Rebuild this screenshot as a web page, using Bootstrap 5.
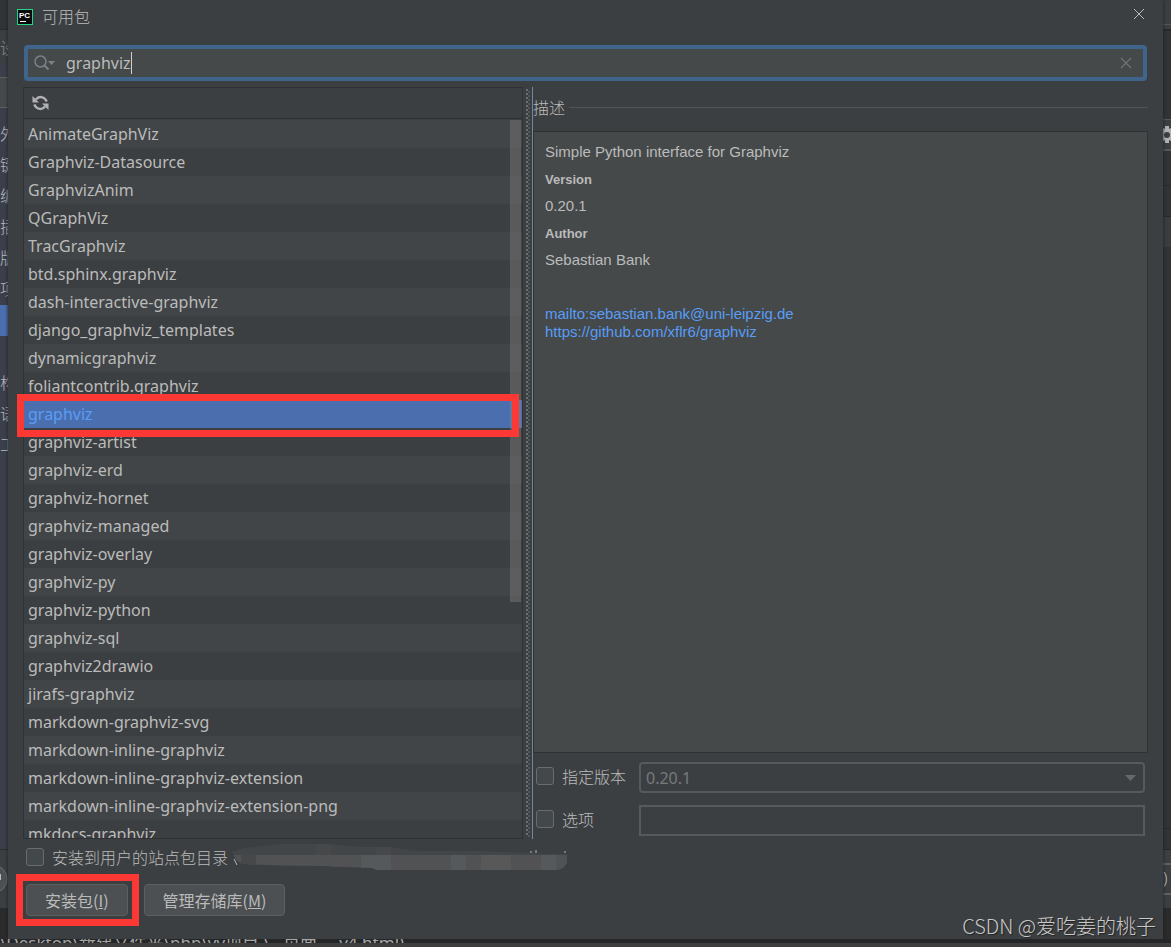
<!DOCTYPE html>
<html lang="zh-CN">
<head>
<meta charset="utf-8">
<meta name="viewport" content="width=device-width, initial-scale=1">
<title>可用包</title>
<link href="https://cdn.jsdelivr.net/npm/bootstrap@5.3.0/dist/css/bootstrap.min.css" rel="stylesheet">
<script src="https://cdn.jsdelivr.net/npm/bootstrap@5.3.0/dist/js/bootstrap.bundle.min.js" defer></script>
<style>
  :root { --panel:#3c3f41; --field:#45494a; --line:#2f3132; --ink:#bbbbbb; --dim:#777a7c; --link:#589df6; }
  body { background:#2b2b2b; color:var(--ink); font:16px/28px "Noto Sans","Noto Sans CJK SC",sans-serif; height:100vh; overflow:hidden; }
  .cjk { font-family:"Noto Sans CJK SC",sans-serif; font-weight:300; }
  .edge { width:8px; overflow:hidden; white-space:nowrap; flex:none; font-weight:300; }
  .edge-left { background:linear-gradient(#313335 29px,#2b2b2b 29px 30px,#3c3f41 30px 65px,#3b3f4b 65px 77px,#5e6060 77px 78px,#45494a 78px 107px,#5e6060 107px 108px,#3b3f4b 108px 849px,#2b2d2e 849px 850px,#3c3f41 850px 908px,#2b2b2b 908px); }
  .edge-right { background:linear-gradient(#3c3f41 24px,#555759 24px 25px,#3c3f41 25px 29px,#28292a 29px 31px,#313335 31px 119px,#555759 119px 120px,#3c3f41 120px 149px,#555759 149px 151px,#313335 151px 185px,#28292a 185px 186px,#313335 186px 216px,#28292a 216px 217px,#3a3c3e 217px 247px,#313335 247px 828px,#28292a 828px 829px,#313335 829px 849px,#28292a 849px 850px,#3c3f41 850px 863px,#5e6060 863px 865px,#3c3f41 865px 893px,#5e6060 893px 895px,#3c3f41 895px 908px,#2b2b2b 908px); }
  .edge li { height:31px; line-height:31px; }
  .edge-top { height:118px; padding-top:32px; line-height:31px; color:#8a8c8d; }
  .edge .current { background:#4b6eaf; margin-top:1px; height:31px; }
  .dialog { background:var(--panel); box-shadow:0 0 3px #1c1d1e; z-index:1; min-width:0; }
  .title-row { height:45px; flex:none; padding:0 16px 0 9px; }
  .title-row .logo { margin-top:9px; }
  .title-row .caption { margin:2px 0 0 9px; }
  .title-row .close-btn { margin:8px 2px 0; }
  .icon-btn { background:none; border:0; padding:0; line-height:0; }
  .search { height:36px; flex:none; border:4px solid #40658d; border-radius:4px; background:var(--field); margin:0 16px; padding:0 11px 0 6px; }
  .search input { background:none; border:0; outline:0; color:var(--ink); font-size:16px; padding:0; margin-left:10px; field-sizing:content; }
  .caret { width:1px; height:22px; background:#d0d0d0; }
  .panes { display:grid; flex:1 1 0; grid-template:minmax(0,1fr) / minmax(0,500fr) 9px minmax(0,616fr); margin:6px 15px 0; min-height:0; }
  .left-pane { border:1px solid var(--line); min-height:0; }
  .tool-row { height:31px; padding-left:8px; border-bottom:1px solid var(--line); }
  .packages { overflow-x:visible; overflow-y:clip; min-height:0; position:relative; padding-top:1px; }
  .packages li { height:28px; padding-left:4px; white-space:nowrap; }
  .packages li:nth-child(odd) { background:#414547; }
  .packages li.chosen { background:#4b6eaf; color:var(--link); position:relative; }
  .thumb { position:absolute; top:1px; right:1px; width:11px; height:67%; background:rgba(140,135,135,.38); }
  .marker { position:absolute; border:7px solid #fc3835; z-index:2; pointer-events:none; }
  .marker-row { inset:-6px 3px -9px -7px; }
  .marker-btn { inset:-11px -12px -11px -11px; }
  .splitter { margin:2px 2px 2px 3px; width:4px;
    background:radial-gradient(circle at 1px 1px,#6c6f71 0 1px,transparent 1px) 0 0/4px 4px, radial-gradient(circle at 3px 3px,#55585a 0 1px,transparent 1px) 0 0/4px 4px; }
  .right-pane { border-left:1px solid #74889d; min-height:0; }
  .desc-head { height:40px; margin-bottom:4px; }
  .desc-head .rule { height:1px; background:#515557; }
  .desc { background:var(--field); border:1px solid var(--line); font:15px/18px "Liberation Sans",sans-serif; padding:11px; min-height:0; overflow:hidden; }
  .desc p { margin:0 0 9px; }
  .desc h2 { font-size:13px; line-height:19px; font-weight:700; margin:0 0 8px; }
  .desc .links { margin-top:36px; }
  .desc a, .desc a:hover { color:var(--link); text-decoration:none; }
  .options { display:grid; grid-template-columns:103px minmax(0,1fr); row-gap:12px; padding:9px 3px 3px; }
  .options label { line-height:26px; padding-bottom:4px; }
  .tick { appearance:none; width:18px; height:18px; margin:0; flex:none; border:1px solid #6b6b6b; border-radius:3px; background:#43494a; }
  .field { height:31px; border:2px solid #57595a; background:var(--panel); color:var(--dim); border-radius:0; padding:0 5px; width:100%; font-size:16px; line-height:24px; }
  select.field { border-radius:4px; appearance:none; opacity:1; }
  .arrow { position:absolute; right:9px; top:13px; }
  .site-row { height:36px; flex:none; padding-left:18px; }
  .buttons { flex:none; padding:9px 18px 23px; gap:16px; }
  .push { height:32px; background:#4c5052; border:1px solid #5e6060; border-radius:4px; color:var(--ink); line-height:28px; padding:0 18px; position:relative; }
  .behind { height:8px; flex:none; overflow:hidden; border-bottom:4px solid #3c3e40; background:#252627; white-space:nowrap; line-height:8px; font-size:17px; color:#a5a5a5; }
  .credit { position:absolute; right:15px; bottom:7px; z-index:3; font-size:20px; line-height:28px; color:#c9c9c9; text-shadow:1px 1px 1px #222; }
</style>
</head>
<body class="d-flex flex-column">
<div class="d-flex flex-grow-1 overflow-hidden">
  <aside class="edge edge-left cjk">
    <div class="edge-top">设</div>
    <ul class="list-unstyled m-0">
      <li>外</li><li>键</li><li>编</li><li>插</li><li>版</li><li>项</li><li class="current"></li><li></li><li>构</li><li>语</li><li>工</li>
    </ul>
    <svg width="8" height="30" style="margin-top:404px"><circle cx="-7" cy="15" r="14" fill="#4c5052" stroke="#6a6d6f"/><path d="M0 10v6" stroke="#bbb" stroke-width="2"/></svg>
  </aside>
  <main class="dialog d-flex flex-column flex-grow-1">
    <header class="title-row d-flex cjk">
      <svg class="logo flex-shrink-0" width="16" height="16" viewBox="0 0 16 16">
        <rect x=".5" y=".5" width="15" height="15" fill="#0a0a0a" stroke="#21d789"/>
        <text x="2" y="9" font-family="Liberation Sans" font-size="8" font-weight="700" fill="#fff">PC</text>
        <path d="M3 12.5h6" stroke="#fff"/>
      </svg>
      <span class="caption">可用包</span>
      <button class="icon-btn close-btn ms-auto align-self-start" aria-label="关闭"><svg width="12" height="12"><path d="M1 1l10 10M11 1L1 11" stroke="#b9bbbc"/></svg></button>
    </header>
    <div class="search d-flex align-items-center">
      <svg width="22" height="18" fill="none" stroke="#7a8288"><circle cx="6.500" cy="7.500" r="5.500" stroke-width="1.500"/><path d="M10.500 11.500l4 4" stroke-width="2"/><path d="M14 7h7l-3.500 4z" fill="#7a8288" stroke="none"/></svg>
      <input id="q" value="graphviz" aria-label="搜索"><span class="caret"></span>
      <button class="icon-btn ms-auto" aria-label="清除"><svg width="12" height="12"><path d="M1 1l10 10M11 1L1 11" stroke="#6c7478" stroke-width="1.300"/></svg></button>
    </div>
    <div class="panes">
      <section class="left-pane d-flex flex-column">
        <div class="tool-row d-flex align-items-center flex-shrink-0">
          <button class="icon-btn" aria-label="刷新"><svg width="17" height="16" viewBox="0 0 17 16" fill="none" stroke="#afb1b3" stroke-width="2.400"><path d="M4 4.500C6.500 1 12 1 14.800 6.500M13 11.500C10.500 15 5 15 2.200 9.500"/><path d="M.5 1v6.500H7zM16.500 15V8.500H10z" fill="#afb1b3" stroke="none"/></svg></button>
        </div>
        <div class="packages flex-grow-1">
          <ul class="list-unstyled m-0">
            <li>AnimateGraphViz</li><li>Graphviz-Datasource</li><li>GraphvizAnim</li><li>QGraphViz</li><li>TracGraphviz</li><li>btd.sphinx.graphviz</li><li>dash-interactive-graphviz</li><li>django_graphviz_templates</li><li>dynamicgraphviz</li><li>foliantcontrib.graphviz</li>
            <li class="chosen">graphviz<span class="marker marker-row"></span></li>
            <li>graphviz-artist</li><li>graphviz-erd</li><li>graphviz-hornet</li><li>graphviz-managed</li><li>graphviz-overlay</li><li>graphviz-py</li><li>graphviz-python</li><li>graphviz-sql</li><li>graphviz2drawio</li><li>jirafs-graphviz</li><li>markdown-graphviz-svg</li><li>markdown-inline-graphviz</li><li>markdown-inline-graphviz-extension</li><li>markdown-inline-graphviz-extension-png</li><li>mkdocs-graphviz</li>
          </ul>
          <div class="thumb"></div>
        </div>
      </section>
      <div class="splitter"></div>
      <section class="right-pane d-flex flex-column">
        <div class="desc-head d-flex align-items-center flex-shrink-0 cjk"><span>描述</span><span class="rule flex-grow-1 ms-1"></span></div>
        <article class="desc flex-grow-1">
          <p>Simple Python interface for Graphviz</p>
          <h2>Version</h2><p>0.20.1</p>
          <h2>Author</h2><p>Sebastian Bank</p>
          <div class="links"><a href="mailto:sebastian.bank@uni-leipzig.de">mailto:sebastian.bank@uni-leipzig.de</a><br><a href="https://github.com/xflr6/graphviz">https://github.com/xflr6/graphviz</a></div>
        </article>
        <div class="options align-items-center">
          <label class="d-flex align-items-center gap-2 cjk"><input class="tick" type="checkbox">指定版本</label>
          <div class="position-relative d-flex"><select class="field" disabled aria-label="版本"><option>0.20.1</option></select><svg class="arrow" width="11" height="6"><path d="M0 0h11L5.500 6z" fill="#66696b"/></svg></div>
          <label class="d-flex align-items-center gap-2 cjk"><input class="tick" type="checkbox">选项</label>
          <input class="field" disabled aria-label="选项">
        </div>
      </section>
    </div>
    <div class="site-row d-flex align-items-center cjk">
      <label class="d-flex align-items-center gap-2"><input class="tick" type="checkbox">安装到用户的站点包目录</label>
      <svg width="340" height="26" viewBox="0 0 340 26" class="ms-1">
        <defs><clipPath id="smear"><path d="M0 8l12-4 20-2 15-2h50l25 3h35l30 4h60l72 3h16v9l-4 5-6 2H145l-5-2-50-2-55-1-25-1-6-4z"/></clipPath></defs>
        <g clip-path="url(#smear)">
          <path d="M0 0h340v26H0z" fill="#434648"/>
          <path d="M0 11h340v15H0z" fill="#505254"/>
          <path d="M9 11h15v15H9zM84 0h15v11H84zM144 0h15v11h-15z" fill="#47484a"/>
          <path d="M39 11h30v15H39zM99 11h15v15H99zM159 11h15v15h-15zM294 11h15v15h-15z" fill="#525254"/>
          <path d="M129 11h30v15h-30zM219 11h15v15h-15zM309 11h15v15h-15z" fill="#56595c"/>
          <path d="M249 11h30v15h-30z" fill="#585859"/>
        </g>
        <path d="M2 15l3 6M299 7v2M304 6v3M333 7v2" stroke="#b5b8ba"/>
      </svg>
    </div>
    <div class="buttons d-flex cjk">
      <button class="push">安装包(<u>I</u>)<span class="marker marker-btn"></span></button>
      <button class="push">管理存储库(<u>M</u>)</button>
    </div>
  </main>
  <aside class="edge edge-right">
    <svg class="d-block" width="8" height="18" style="margin-top:126px"><path d="M2 0h4v3l2-1v13l-2-1v3H2v-3l-2 1V2l2 1z" fill="#afb1b3"/><circle cx="4" cy="9" r="3" fill="#3c3f41"/></svg>
    <div style="margin-top:720px">)</div>
  </aside>
</div>
<footer class="behind">\Desktop\新建文件夹\php\vv项目 \ &nbsp; 页面 &nbsp; &nbsp; v4.html)</footer>
<div class="credit cjk">CSDN @爱吃姜的桃子</div>
</body>
</html>
